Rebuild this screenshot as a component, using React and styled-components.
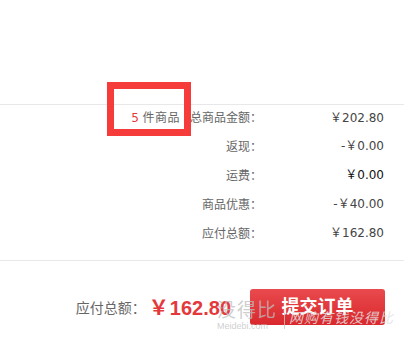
import React from "react";
import styled, { createGlobalStyle } from "styled-components";

const Global = createGlobalStyle`
  html, body { margin: 0; padding: 0; background: #fff; }
  body { width: 404px; height: 349px; overflow: hidden; }
`;

const Page = styled.div`
  position: relative;
  width: 404px;
  height: 349px;
  background: #fff;
  font-family: "DejaVu Sans", "Noto Sans CJK SC", sans-serif;
  color: #666;
`;

const TopBlank = styled.div`
  height: 104px;
`;

const Summary = styled.div`
  border-top: 1px solid #e8e8e8;
  border-bottom: 1px solid #e8e8e8;
  padding: 3px 20px 18px 0;
  display: flex;
  flex-direction: column;
  gap: 10.9px;
`;

const Row = styled.div`
  display: flex;
  justify-content: flex-end;
  align-items: center;
  height: 18px;
  font-size: 12px;
  line-height: 18px;
`;

const Count = styled.div`
  margin-right: 10px;
  font-family: "Noto Sans CJK SC", sans-serif;
  color: #666;
  letter-spacing: 0.5px;
`;

const Num = styled.span`
  font-family: "DejaVu Sans", sans-serif;
  color: #e4393c;
  margin-right: 3px;
`;

const Label = styled.div`
  font-family: "Noto Sans CJK SC", sans-serif;
  text-align: right;
  color: #666;
`;

const Value = styled.div`
  width: 122px;
  text-align: right;
  color: ${(p) => (p.$strong ? "#111" : "#444")};
  font-family: "DejaVu Sans", "Noto Sans CJK SC", sans-serif;
`;

const YenSmall = styled.span`
  font-family: "Noto Sans CJK SC", sans-serif;
`;

const Footer = styled.div`
  display: flex;
  justify-content: flex-end;
  align-items: center;
  padding: 28px 19px 0 0;
`;

const TotalLabel = styled.span`
  font-family: "Noto Sans CJK SC", sans-serif;
  font-size: 14px;
  color: #666;
  margin-right: 3px;
`;

const TotalAmount = styled.span`
  display: flex;
  align-items: baseline;
  color: #e4393c;
  font-family: "Liberation Sans", Arial, sans-serif;
  font-weight: bold;
  font-size: 20px;
  margin-right: 19px;
`;

const Yen = styled.span`
  font-family: "Noto Sans CJK SC", sans-serif;
  font-size: 20px;
  font-weight: bold;
  margin-right: 1px;
`;

const SubmitButton = styled.button`
  width: 135px;
  height: 36px;
  border: none;
  border-radius: 3px;
  background: linear-gradient(to bottom, #e94a4e, #d9282d);
  color: #fff;
  font-family: "Noto Sans CJK SC", sans-serif;
  font-size: 18px;
  font-weight: bold;
  padding: 0 0 3px;
  cursor: pointer;
`;

const Highlight = styled.div`
  position: absolute;
  left: 107px;
  top: 82px;
  width: 84px;
  height: 54px;
  box-sizing: border-box;
  border: 7px solid #f63b3b;
  pointer-events: none;
`;

const Watermark = styled.div`
  position: absolute;
  left: 217px;
  top: 298px;
  display: flex;
  align-items: flex-start;
  pointer-events: none;
  color: rgba(190, 190, 190, 0.75);
`;

const MarkBrand = styled.div`
  display: flex;
  flex-direction: column;
  align-items: flex-start;
`;

const MarkName = styled.div`
  font-family: "Noto Sans CJK SC", sans-serif;
  font-size: 19px;
  line-height: 22px;
  letter-spacing: 1px;
`;

const MarkSite = styled.div`
  font-family: "Liberation Sans", sans-serif;
  font-size: 9px;
  line-height: 10px;
  margin-top: 1px;
`;

const MarkBar = styled.div`
  width: 1px;
  height: 16px;
  margin: 15px 4px 0 7px;
  background: rgba(200, 200, 200, 0.8);
`;

const MarkSlogan = styled.div`
  font-family: "Noto Sans CJK SC", sans-serif;
  font-size: 14px;
  font-style: italic;
  line-height: 16px;
  margin-top: 11px;
  letter-spacing: 1px;
  color: rgba(225, 225, 225, 0.85);
`;

const rows = [
  { label: "返现：", sign: "-", amount: "0.00" },
  { label: "运费：", sign: "", amount: "0.00", strong: true },
  { label: "商品优惠：", sign: "-", amount: "40.00" },
  { label: "应付总额：", sign: "", amount: "162.80" },
];

export default function App() {
  return (
    <Page>
      <Global />
      <TopBlank />
      <Summary>
        <Row>
          <Count>
            <Num>5</Num>件商品
          </Count>
          <Label>总商品金额：</Label>
          <Value>
            <YenSmall>￥</YenSmall>202.80
          </Value>
        </Row>
        {rows.map((r) => (
          <Row key={r.label}>
            <Label>{r.label}</Label>
            <Value $strong={r.strong}>
              {r.sign}
              <YenSmall>￥</YenSmall>
              {r.amount}
            </Value>
          </Row>
        ))}
      </Summary>
      <Footer>
        <TotalLabel>应付总额：</TotalLabel>
        <TotalAmount>
          <Yen>￥</Yen>162.80
        </TotalAmount>
        <SubmitButton>提交订单</SubmitButton>
      </Footer>
      <Highlight />
      <Watermark>
        <MarkBrand>
          <MarkName>没得比</MarkName>
          <MarkSite>Meidebi.com</MarkSite>
        </MarkBrand>
        <MarkBar />
        <MarkSlogan>网购有钱没得比</MarkSlogan>
      </Watermark>
    </Page>
  );
}
